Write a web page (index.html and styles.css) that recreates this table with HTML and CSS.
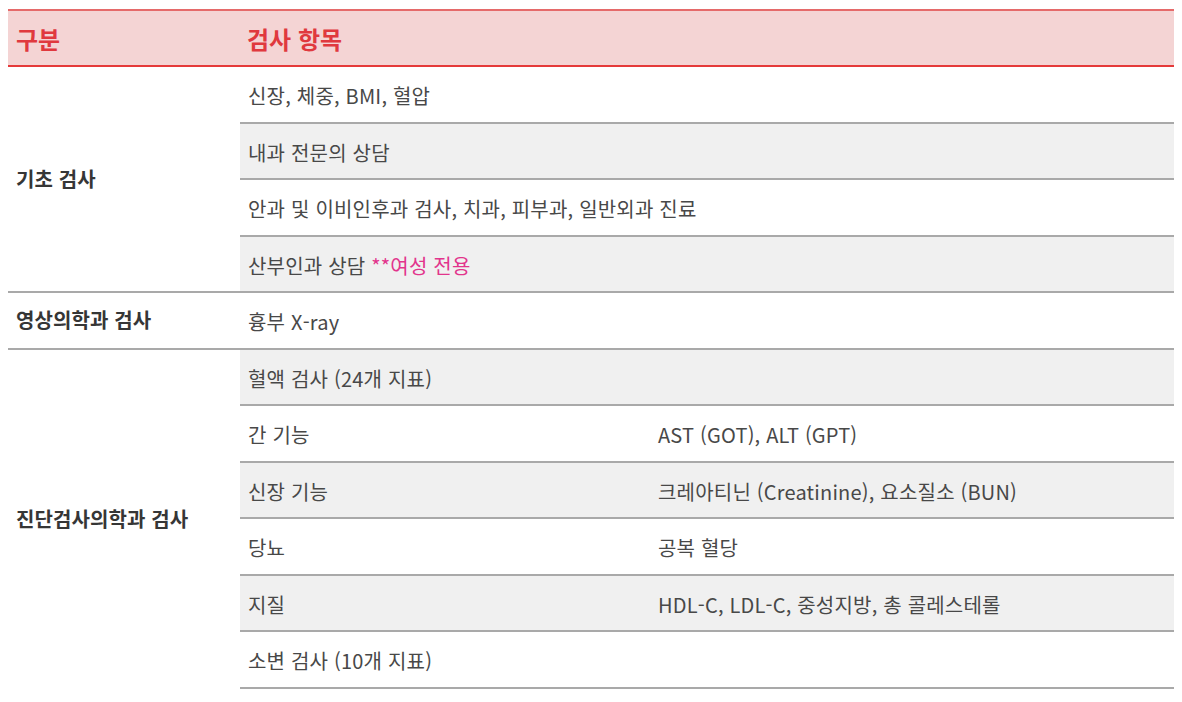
FILE: index.html
```html
<!DOCTYPE html>
<html lang="ko">
<head>
<meta charset="utf-8">
<link rel="stylesheet" href="styles.css">
</head>
<body>
<table class="exam">
  <colgroup>
    <col class="c1"><col class="c2"><col class="c3">
  </colgroup>
  <thead>
    <tr>
      <th>구분</th>
      <th colspan="2">검사 항목</th>
    </tr>
  </thead>
  <tbody>
    <tr>
      <td class="cat sec" rowspan="4">기초 검사</td>
      <td colspan="2">신장, 체중, BMI, 혈압</td>
    </tr>
    <tr><td colspan="2" class="alt">내과 전문의 상담</td></tr>
    <tr><td colspan="2">안과 및 이비인후과 검사, 치과, 피부과, 일반외과 진료</td></tr>
    <tr><td colspan="2" class="alt sec">산부인과 상담 <span class="pink">**여성 전용</span></td></tr>
    <tr>
      <td class="cat sec">영상의학과 검사</td>
      <td colspan="2" class="sec">흉부 X-ray</td>
    </tr>
    <tr>
      <td class="cat nob" rowspan="6">진단검사의학과 검사</td>
      <td colspan="2" class="alt">혈액 검사 (24개 지표)</td>
    </tr>
    <tr><td>간 기능</td><td>AST (GOT), ALT (GPT)</td></tr>
    <tr><td class="alt">신장 기능</td><td class="alt">크레아티닌 (Creatinine), 요소질소 (BUN)</td></tr>
    <tr><td>당뇨</td><td>공복 혈당</td></tr>
    <tr><td class="alt">지질</td><td class="alt">HDL-C, LDL-C, 중성지방, 총 콜레스테롤</td></tr>
    <tr><td colspan="2">소변 검사 (10개 지표)</td></tr>
  </tbody>
</table>
</body>
</html>
```

FILE: styles.css
```css
html, body {
  margin: 0;
  padding: 0;
  background: #ffffff;
}
body {
  padding: 9px 8px 0 8px;
  font-family: "Noto Sans CJK KR", "Noto Sans", sans-serif;
  color: #484848;
}
.exam {
  width: 1166px;
  border-collapse: separate;
  border-spacing: 0;
  table-layout: fixed;
}
.c1 { width: 232px; }
.c2 { width: 410px; }
.c3 { width: auto; }

.exam th {
  background: #f4d4d4;
  color: #e0393e;
  font-size: 24px;
  font-weight: 700;
  text-align: left;
  line-height: 30px;
  padding: 13px 8px 11px 8px;
  border-top: 2px solid #e56a6a;
  border-bottom: 2px solid #e53a3a;
}
.exam th + th { padding-left: 7px; }

.exam td {
  font-size: 20px;
  line-height: 26.5px;
  padding: 16px 8px 12px 8px;
  border-bottom: 2px solid #a9a9a9;
  letter-spacing: 0.2px;
  vertical-align: middle;
  white-space: nowrap;
}
.exam td.cat {
  font-size: 20px;
  font-weight: 700;
  color: #363636;
  border-bottom: none;
  padding-top: 12px;
  letter-spacing: 0.1px;
}
.exam td.cat.sec { border-bottom: 2px solid #a9a9a9; }
.exam td.alt { background: #f0f0f0; }
.pink { color: #e2348c; }
```
